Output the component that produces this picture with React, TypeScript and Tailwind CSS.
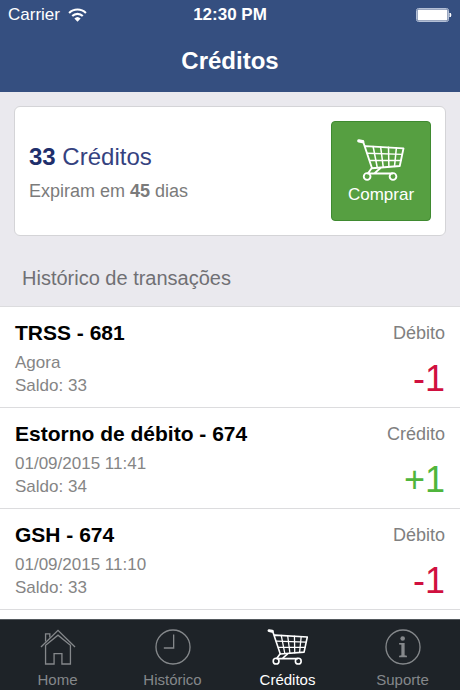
import type { ReactNode } from 'react';

interface Transaction {
  id: number;
  title: string;
  date: string;
  balance: number;
  type: 'Débito' | 'Crédito';
  amount: string;
}

const transactions: Transaction[] = [
  { id: 1, title: 'TRSS - 681', date: 'Agora', balance: 33, type: 'Débito', amount: '-1' },
  { id: 2, title: 'Estorno de débito - 674', date: '01/09/2015 11:41', balance: 34, type: 'Crédito', amount: '+1' },
  { id: 3, title: 'GSH - 674', date: '01/09/2015 11:10', balance: 33, type: 'Débito', amount: '-1' },
];

function CartIcon({ className }: { className: string }) {
  return (
    <svg viewBox="0 0 128 112" className={className} fill="none" stroke="currentColor" strokeLinecap="round" strokeLinejoin="round" aria-hidden="true">
      <path d="M5 5 L15 7" strokeWidth="9" />
      <path d="M16 6 L40 78 L114 72 L124 25 L23 19" strokeWidth="5" />
      <path d="M28 38 L120 41 M34 57 L117 57" strokeWidth="4" />
      <path d="M43 20 L54 76 M63 21 L70 75 M84 22 L85 74 M105 24 L100 73" strokeWidth="4" />
      <path d="M39 78 L29 92 H94 M62 78 L47 91" strokeWidth="5" />
      <circle cx="27" cy="100" r="9" strokeWidth="5" />
      <circle cx="96" cy="100" r="9" strokeWidth="5" />
    </svg>
  );
}

function HomeIcon() {
  return (
    <svg viewBox="0 0 108 110" className="h-9 w-9" fill="none" stroke="currentColor" strokeWidth="4" aria-hidden="true">
      <path d="M2 55 L54 4 L106 55" />
      <path d="M16 50 V107 H42 V75 H66 V107 H92 V50 L54 19 Z" />
      <path d="M16 38 V15 H29 V26" />
    </svg>
  );
}

function ClockIcon() {
  return (
    <svg viewBox="0 0 110 110" className="h-9 w-9" fill="none" stroke="currentColor" strokeWidth="4" aria-hidden="true">
      <circle cx="55" cy="55" r="52" />
      <path d="M57 17 V58 H27" />
    </svg>
  );
}

function InfoIcon() {
  return (
    <svg viewBox="0 0 110 110" className="h-9 w-9" fill="currentColor" aria-hidden="true">
      <circle cx="55" cy="55" r="52" fill="none" stroke="currentColor" strokeWidth="4" />
      <circle cx="54" cy="29" r="7" />
      <path d="M43 43 H60 V80 L67 82 V86 H43 V82 L50 80 V48 L43 47 Z" />
    </svg>
  );
}

function StatusBar() {
  return (
    <div className="grid h-[30px] grid-cols-3 items-center px-2 text-[17px]">
      <div className="flex items-center gap-2">
        <span>Carrier</span>
        <svg viewBox="0 0 54 40" className="h-[14px] w-[19px]" fill="none" stroke="currentColor" strokeWidth="6" aria-hidden="true">
          <path d="M3 14 A34 34 0 0 1 51 14" />
          <path d="M12 23 A21 21 0 0 1 42 23" />
          <path d="M18 30 A13 13 0 0 1 36 30 L27 39 Z" fill="currentColor" stroke="none" />
        </svg>
      </div>
      <span className="text-center font-bold whitespace-nowrap">12:30 PM</span>
      <svg viewBox="0 0 36 14" className="h-[14px] w-9 justify-self-end" aria-hidden="true">
        <rect x="0.5" y="0.5" width="32" height="13" rx="2" fill="none" stroke="#b4c0d6" />
        <rect x="1.5" y="1.5" width="30" height="11" rx="1" fill="#fff" />
        <path d="M34 5 Q36 7 34 9 Z" fill="#fff" stroke="#fff" />
      </svg>
    </div>
  );
}

function TransactionRow({ item }: { item: Transaction }) {
  return (
    <li className="flex justify-between border-b border-[#dcdcde] px-[15px] pt-3 pb-2">
      <div>
        <h3 className="text-[21px] leading-7 font-bold text-black">{item.title}</h3>
        <p className="mt-1 text-[17px] leading-[23px] text-[#858585]">{item.date}</p>
        <p className="text-[17px] leading-[23px] text-[#858585]">Saldo: {item.balance}</p>
      </div>
      <div className="text-right">
        <p className="text-[18px] leading-7 text-[#808080]">{item.type}</p>
        <p className={`mt-3 text-[36px] leading-10 ${item.type === 'Débito' ? 'text-[#d0103f]' : 'text-[#4fb53c]'}`}>
          {item.amount}
        </p>
      </div>
    </li>
  );
}

function TabItem({ label, icon, active = false }: { label: string; icon: ReactNode; active?: boolean }) {
  return (
    <a
      href="#"
      aria-current={active ? 'page' : undefined}
      className={`flex flex-1 flex-col items-center gap-[5px] text-[15px] leading-5 ${active ? 'text-white' : 'text-[#85888b]'}`}
    >
      {icon}
      <span>{label}</span>
    </a>
  );
}

export default function App() {
  return (
    <div className="flex min-h-screen flex-col bg-white font-['Liberation_Sans',Arial,sans-serif]">
      <header className="bg-[#354f80] text-white">
        <StatusBar />
        <h1 className="pt-[15px] pb-[15px] text-center text-[24px] leading-8 font-bold">Créditos</h1>
      </header>

      <main className="flex-1">
        <div className="border-b border-[#dcdcde] bg-[#eae9ee] px-[14px] pt-[14px]">
          {/* Saldo */}
          <section className="flex items-center justify-between rounded-md border border-[#d4d4d7] bg-white p-[14px]">
            <div className="pt-1">
              <p className="text-[24px] leading-8 text-[#35427f]">
                <strong className="text-[#1f2f6b]">33</strong> Créditos
              </p>
              <p className="mt-1 text-[18px] leading-7 text-[#7b7b7b]">
                Expiram em <strong>45</strong> dias
              </p>
            </div>
            <button
              type="button"
              className="flex h-25 w-25 flex-col items-center justify-center rounded-sm border border-[#3f8a30] bg-[#569f41] pt-1 text-[17px] leading-6 text-white"
            >
              <CartIcon className="h-[42px] w-12" />
              <span className="mt-[2px]">Comprar</span>
            </button>
          </section>

          <h2 className="px-2 pt-7 pb-[14px] text-[20px] leading-7 text-[#707074]">Histórico de transações</h2>
        </div>

        <ul>
          {transactions.map((item) => (
            <TransactionRow key={item.id} item={item} />
          ))}
        </ul>
      </main>

      <nav className="sticky bottom-0 flex border-t border-[#555a5e] bg-[#1e2328] pt-[9px]">
        <TabItem label="Home" icon={<HomeIcon />} />
        <TabItem label="Histórico" icon={<ClockIcon />} />
        <TabItem label="Créditos" icon={<CartIcon className="h-9 w-[42px]" />} active />
        <TabItem label="Suporte" icon={<InfoIcon />} />
      </nav>
    </div>
  );
}
